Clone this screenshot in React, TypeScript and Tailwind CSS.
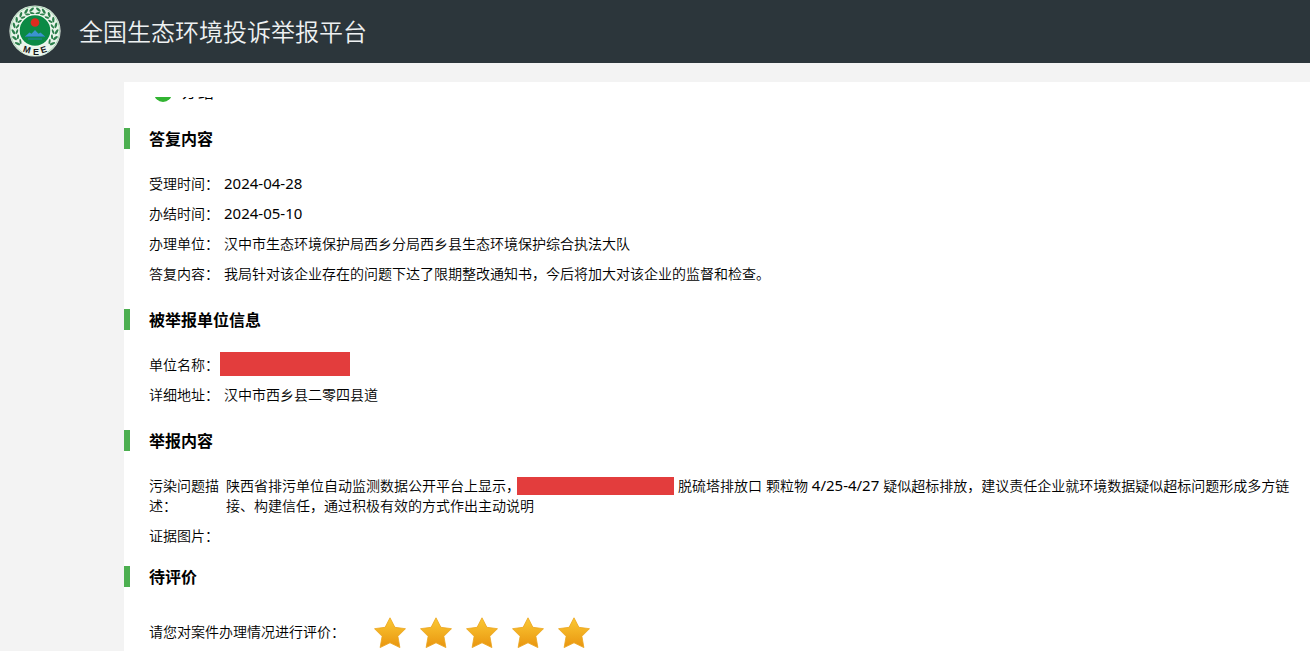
import type { ReactNode } from "react";

const leafAngles = [-126, -109, -92, -75, -58, -41, -24, -9, 9, 24, 41, 58, 75, 92, 109, 126];

function Emblem() {
  return (
    <svg viewBox="0 0 52 52" className="size-13 shrink-0" role="img" aria-label="MEE">
      <circle cx="26" cy="26" r="25.6" fill="#e9f4ea" />
      <circle cx="26" cy="26" r="24.6" fill="none" stroke="#7dbd8e" strokeWidth="0.6" />
      {leafAngles.map((a) => (
        <g key={a} transform={`rotate(${a} 26 26)`} fill="#2b7f4b">
          <ellipse cx="26" cy="4.4" rx="2.9" ry="1.2" transform={`rotate(${a > 0 ? 32 : -32} 26 4.4)`} />
          <ellipse cx="26" cy="8" rx="2.5" ry="1" transform={`rotate(${a > 0 ? -26 : 26} 26 8)`} />
        </g>
      ))}
      <circle cx="26" cy="25.5" r="16.4" fill="#f4faf4" />
      <circle cx="26" cy="25.5" r="15.3" fill="#0b8a45" />
      <circle cx="26" cy="17.5" r="4.3" fill="#dd2c1f" />
      <path d="M16.5 31l4-3.4 2 1.2 3.5-3.8 3.5 3.8 2-1.2 4 3.4z" fill="#3b93cf" />
      <path d="M16 31.6h20M19 34h14" stroke="#2b80b4" strokeWidth="0.9" />
      <path d="M11 41q15 6 30 0l-3 7q-12 6-24 0z" fill="#eef7ef" />
      <g fontFamily="Liberation Sans, sans-serif" fontSize="9" fontWeight="700" fill="#1a1a1a" textAnchor="middle">
        <text x="17" y="47.5" transform="rotate(16 17 47.5)">M</text>
        <text x="27" y="49.5">E</text>
        <text x="35.5" y="47.5" transform="rotate(-18 35.5 47.5)">E</text>
      </g>
    </svg>
  );
}

function Star({ n }: { n: number }) {
  return (
    <button type="button" aria-label={`${n}星`} className="size-8">
      <svg viewBox="0 0 32 32" className="size-8">
        <defs>
          <linearGradient id={`star${n}`} x1="0" y1="0" x2="0" y2="1">
            <stop offset="0" stopColor="#fbc934" />
            <stop offset="1" stopColor="#e9950f" />
          </linearGradient>
        </defs>
        <path
          d="M16 .8l4.9 9.5 10.6 1.4-7.6 7.6 2 11.3L16 25.8l-9.9 4.8 2-11.3L.5 11.7l10.6-1.4z"
          fill={`url(#star${n})`}
          stroke="#eba51e"
          strokeWidth="0.8"
          strokeLinejoin="round"
        />
      </svg>
    </button>
  );
}

function Heading({ children }: { children: ReactNode }) {
  return (
    <h2 className="flex items-center text-base leading-[21px] font-bold text-black">
      <span className="mr-[19px] h-[21px] w-1.5 shrink-0 bg-[#4caf50]" />
      {children}
    </h2>
  );
}

function Row({ label, children }: { label: string; children?: ReactNode }) {
  return (
    <div className="flex">
      <dt className="w-[75px] shrink-0">{label}</dt>
      <dd className="flex-1">{children}</dd>
    </div>
  );
}

function Latin({ children }: { children: ReactNode }) {
  return <span className="font-['Noto_Sans',sans-serif] text-[15px] leading-none font-normal">{children}</span>;
}

export default function App() {
  return (
    <div className="flex h-screen flex-col overflow-hidden bg-[#f3f3f3] font-['Noto_Sans_CJK_SC',sans-serif] text-sm leading-5 font-[350] text-black">
      <header className="flex h-[63px] shrink-0 items-center gap-[18px] bg-[#2c363b] px-[9px] pb-0.5">
        <Emblem />
        <h1 className="text-2xl font-[350] text-[#eef1f2]">全国生态环境投诉举报平台</h1>
      </header>
      <main className="ml-31 mt-[19px] min-h-0 flex-1 overflow-hidden bg-white pt-[15px]">
        <div className="flex h-[5px] items-end gap-2.5 overflow-hidden pl-[30px]">
          <span className="size-[18px] shrink-0 rounded-full bg-[#32b432]" />
          <span className="text-base leading-[22px]">办结</span>
        </div>

        <section className="mt-[26px]">
          <Heading>答复内容</Heading>
          <dl className="mt-6 flex flex-col gap-2.5 pl-[25px] pr-4">
            <Row label="受理时间："><Latin>2024-04-28</Latin></Row>
            <Row label="办结时间："><Latin>2024-05-10</Latin></Row>
            <Row label="办理单位：">汉中市生态环境保护局西乡分局西乡县生态环境保护综合执法大队</Row>
            <Row label="答复内容：">我局针对该企业存在的问题下达了限期整改通知书，今后将加大对该企业的监督和检查。</Row>
          </dl>
        </section>

        <section className="mt-[26px]">
          <Heading>被举报单位信息</Heading>
          <dl className="mt-6 flex flex-col gap-2.5 pl-[25px] pr-4">
            <div className="flex h-5 items-center">
              <dt className="w-[71px] shrink-0">单位名称：</dt>
              <dd className="h-6 w-[130px] bg-[#e33d3d]" />
            </div>
            <Row label="详细地址：">汉中市西乡县二零四县道</Row>
          </dl>
        </section>

        <section className="mt-[26px]">
          <Heading>举报内容</Heading>
          <dl className="mt-6 flex flex-col gap-2.5 pl-[25px] pr-4">
            <div className="flex gap-[7px]">
              <dt className="w-[70px] shrink-0">污染问题描述：</dt>
              <dd className="flex-1">
                陕西省排污单位自动监测数据公开平台上显示，
                <span className="mt-0.5 mr-1 -ml-[3px] inline-block h-[18px] w-[157px] bg-[#e33d3d] align-top" />
                脱硫塔排放口<Latin> </Latin>颗粒物<Latin> 4/25-4/27 </Latin>疑似超标排放，建议责任企业就环境数据疑似超标问题形成多方链接、构建信任，通过积极有效的方式作出主动说明
              </dd>
            </div>
            <Row label="证据图片：" />
          </dl>
        </section>

        <section className="mt-[21px]">
          <Heading>待评价</Heading>
          <div className="mt-[30px] flex items-center pl-[25px]">
            <p className="w-[225px] shrink-0 pb-1">请您对案件办理情况进行评价：</p>
            <div className="flex gap-3.5">
              {[1, 2, 3, 4, 5].map((n) => (
                <Star key={n} n={n} />
              ))}
            </div>
          </div>
        </section>
      </main>
    </div>
  );
}
